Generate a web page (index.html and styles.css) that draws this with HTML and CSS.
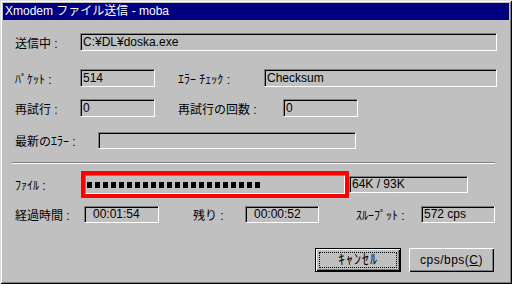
FILE: index.html
```html
<!DOCTYPE html>
<html lang="ja">

<head>
    <meta charset="UTF-8">
    <meta name="viewport" content="width=device-width, initial-scale=1.0">
    <title>Xmodem ファイル送信 - moba</title>
    <link rel="stylesheet" href="styles.css">
</head>

<body>

    <div class="window">
        <div class="titlebar">Xmodem ファイル送信 - moba</div>

        <div class="content">

            <div class="row row-1">
                <span class="label w-65">送信中 :</span>
                <span class="field w-417">C:¥DL¥doska.exe</span>
            </div>

            <div class="row row-2">
                <span class="label w-65">ﾊﾟｹｯﾄ :</span>
                <span class="field w-75">514</span>
                <span class="label second w-86">ｴﾗｰ ﾁｪｯｸ :</span>
                <span class="field w-233">Checksum</span>
            </div>

            <div class="row row-3">
                <span class="label w-65">再試行 :</span>
                <span class="field w-75">0</span>
                <span class="label second w-105">再試行の回数 :</span>
                <span class="field w-75">0</span>
            </div>

            <div class="row row-4">
                <span class="label w-83">最新のｴﾗｰ :</span>
                <span class="field low w-258"></span>
            </div>

            <div class="separator"></div>

            <div class="row row-5">
                <span class="label w-66">ﾌｧｲﾙ :</span>
                <div class="highlight">
                    <div class="progress" id="progress"></div>
                </div>
                <span class="field low w-119">64K / 93K</span>
            </div>

            <div class="row row-6">
                <span class="label w-69">経過時間 :</span>
                <span class="field low w-75 time">00:01:54</span>
                <span class="label third w-52">残り :</span>
                <span class="field low w-74 time">00:00:52</span>
                <span class="label fourth w-65">ｽﾙｰﾌﾟｯﾄ :</span>
                <span class="field low w-74">572 cps</span>
            </div>

            <div class="buttons">
                <button class="btn default"><span class="focus">ｷｬﾝｾﾙ</span></button>
                <button class="btn">cps/bps(<u>C</u>)</button>
            </div>

        </div>
    </div>

    <script>
        // 64K of 93K sent, one block per step
        let progress = document.getElementById("progress");

        for (let i = 0; i < 22; i++) {
            let block = document.createElement("span");
            block.className = "block";
            progress.appendChild(block);
        }
    </script>

</body>

</html>
```

FILE: styles.css
```css
* {
    margin: 0;
    padding: 0;
    box-sizing: border-box;
}

body {
    font-family: 'Liberation Sans', 'Noto Sans CJK JP', sans-serif;
    font-size: 12px;
    background: #c0c0c0;
}

.window {
    width: 512px;
    height: 284px;
    padding: 3px;
    background: #c0c0c0;
    box-shadow: inset 1px 1px #dfdfdf, inset -1px -1px #000,
        inset 2px 2px #fff, inset -2px -2px #808080;
}

.titlebar {
    height: 17px;
    line-height: 17px;
    padding-left: 2px;
    color: #fff;
    background: #000080;
    white-space: nowrap;
}

/* ROWS ======================================= */
.row {
    display: flex;
    align-items: center;
    padding-left: 12px;
}

.row-1 { margin-top: 13px; }
.row-2 { margin-top: 18px; }
.row-3 { margin-top: 12px; }
.row-4 { margin-top: 15px; }
.row-5 { margin-top: 7px; height: 27px; }
.row-6 { margin-top: 8px; }

.label {
    color: #000;
    white-space: nowrap;
    flex-shrink: 0;
}

.label.second { margin-left: 23px; }
.label.third { margin-left: 34px; }
.label.fourth { margin-left: 37px; }

.w-52 { width: 52px; }
.w-65 { width: 65px; }
.w-66 { width: 66px; }
.w-69 { width: 69px; }
.w-74 { width: 74px; }
.w-75 { width: 75px; }
.w-83 { width: 83px; }
.w-86 { width: 86px; }
.w-105 { width: 105px; }
.w-119 { width: 119px; }
.w-233 { width: 233px; }
.w-258 { width: 258px; }
.w-417 { width: 417px; }

/* FIELDS ===================================== */
.field {
    display: block;
    height: 18px;
    line-height: 16px;
    padding-left: 2px;
    color: #000;
    white-space: nowrap;
    flex-shrink: 0;
    border: 1px solid;
    border-color: #808080 #fff #fff #808080;
    box-shadow: inset 1px 1px #000;
}

.field.low {
    height: 17px;
    line-height: 15px;
}

.field.time {
    padding-left: 8px;
}

.separator {
    margin: 13px 0 0 9px;
    width: 483px;
    border-top: 1px solid #808080;
    border-bottom: 1px solid #fff;
}

/* PROGRESS =================================== */
.highlight {
    width: 268px;
    height: 27px;
    border: 4px solid #ff0000;
    flex-shrink: 0;
}

.progress {
    height: 100%;
    display: flex;
    align-items: center;
    gap: 3px;
    padding: 1px 0 0 1px;
    border: 1px solid;
    border-color: #808080 #fff #fff #808080;
}

.block {
    width: 5px;
    height: 6px;
    background: #000;
}

/* BUTTONS ==================================== */
.buttons {
    display: flex;
    justify-content: flex-end;
    gap: 8px;
    margin-top: 25px;
    padding-right: 15px;
}

.btn {
    width: 85px;
    height: 24px;
    font-family: 'Liberation Sans', 'Noto Sans CJK JP', sans-serif;
    font-size: 12px;
    letter-spacing: 0.5px;
    color: #000;
    background: #c0c0c0;
    border: none;
    box-shadow: inset 1px 1px #fff, inset -1px -1px #000,
        inset -2px -2px #808080;
}

.btn u {
    text-decoration-thickness: 1px;
}

.btn.default {
    width: 86px;
    padding: 4px;
    font-size: 14px;
    letter-spacing: 1px;
    box-shadow: inset 0 0 0 1px #000, inset 2px 2px #fff,
        inset -2px -2px #000, inset -3px -3px #808080;
}

.focus {
    display: block;
    height: 100%;
    line-height: 14px;
    outline: 1px dotted #000;
    outline-offset: -1px;
}
```
